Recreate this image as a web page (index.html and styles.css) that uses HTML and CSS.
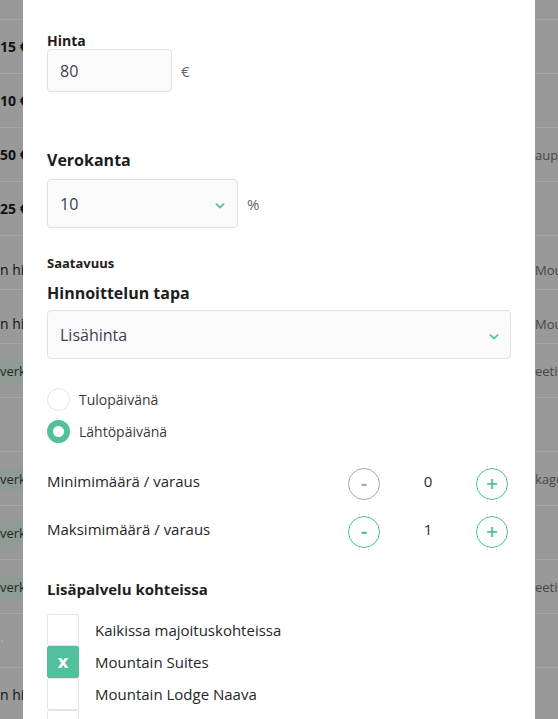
FILE: index.html
```html
<!DOCTYPE html>
<html lang="fi">
<head>
    <meta charset="UTF-8">
    <meta name="viewport" content="width=device-width, initial-scale=1.0">
    <link rel="stylesheet" href="styles.css">
    <title>Lisäpalvelu</title>
</head>
<body>
    <div class="list">
        <div class="row row-top"><span class="left"></span><span class="right"></span></div>
        <div class="row"><span class="left price">15 €</span><span class="right"></span></div>
        <div class="row"><span class="left price">10 €</span><span class="right"></span></div>
        <div class="row"><span class="left price">50 €</span><span class="right">aupa</span></div>
        <div class="row"><span class="left price">25 €</span><span class="right"></span></div>
        <div class="row low"><span class="left">n hinta</span><span class="right">Mountain</span></div>
        <div class="row low"><span class="left">n hinta</span><span class="right">Mountain</span></div>
        <div class="row"><span class="left"><span class="badge">verkko</span></span><span class="right">eeting</span></div>
        <div class="row"><span class="left"></span><span class="right"></span></div>
        <div class="row"><span class="left"><span class="badge">verkko</span></span><span class="right">kage</span></div>
        <div class="row"><span class="left"><span class="badge">verkko</span></span><span class="right"></span></div>
        <div class="row"><span class="left"><span class="badge">verkko</span></span><span class="right">eeting</span></div>
        <div class="row"><span class="left faint">·</span><span class="right"></span></div>
        <div class="row"><span class="left">n hinta</span><span class="right"></span></div>
    </div>

    <div class="modal">
        <div class="field">
            <label class="label label-sm">Hinta</label>
            <div class="inline">
                <div class="input input-price">80</div>
                <span class="unit">€</span>
            </div>
        </div>

        <div class="field field-tax">
            <label class="label">Verokanta</label>
            <div class="inline">
                <div class="input select select-tax">
                    <span>10</span>
                    <svg class="chevron" width="10" height="6" viewBox="0 0 10 6"><path d="M1.5 1.2 L5 4.6 L8.5 1.2" fill="none" stroke="#52bf9d" stroke-width="1.8" stroke-linecap="round"/></svg>
                </div>
                <span class="unit">%</span>
            </div>
        </div>

        <div class="section-title">Saatavuus</div>
        <label class="label">Hinnoittelun tapa</label>
        <div class="input select select-wide">
            <span>Lisähinta</span>
            <svg class="chevron" width="10" height="6" viewBox="0 0 10 6"><path d="M1.5 1.2 L5 4.6 L8.5 1.2" fill="none" stroke="#52bf9d" stroke-width="1.8" stroke-linecap="round"/></svg>
        </div>

        <div class="radios">
            <div class="radio"><span class="dot"></span>Tulopäivänä</div>
            <div class="radio"><span class="dot checked"></span>Lähtöpäivänä</div>
        </div>

        <div class="counters">
            <div class="counter">
                <span class="counter-label">Minimimäärä / varaus</span>
                <div class="stepper">
                    <button class="step disabled">-</button>
                    <span class="count">0</span>
                    <button class="step">+</button>
                </div>
            </div>
            <div class="counter">
                <span class="counter-label">Maksimimäärä / varaus</span>
                <div class="stepper">
                    <button class="step">-</button>
                    <span class="count">1</span>
                    <button class="step">+</button>
                </div>
            </div>
        </div>

        <div class="label label-places">Lisäpalvelu kohteissa</div>
        <div class="checks">
            <div class="check"><span class="box"></span>Kaikissa majoituskohteissa</div>
            <div class="check"><span class="box checked">x</span>Mountain Suites</div>
            <div class="check"><span class="box"></span>Mountain Lodge Naava</div>
            <div class="check"><span class="box"></span>Mountain Lodge Tunturi</div>
        </div>
    </div>
</body>
</html>
```

FILE: styles.css
```css
body {
    margin: 0;
    height: 719px;
    overflow: hidden;
    background-color: #999999;
    font-family: "Open Sans", "DejaVu Sans", sans-serif;
    position: relative;
}

.list {
    display: flex;
    flex-direction: column;
}

.row {
    height: 54px;
    border-bottom: 1px solid #a7a7a7;
    display: flex;
    align-items: center;
    justify-content: space-between;
    box-sizing: border-box;
}

.row-top {
    height: 20px;
}

.row.low {
    padding-top: 14px;
}

.left {
    width: 80px;
    font-size: 14px;
    color: #121212;
    white-space: nowrap;
}

.left.price {
    font-weight: 700;
}

.left.faint {
    color: #b0b0b0;
}

.badge {
    background-color: #8e9c95;
    color: #1f2a25;
    font-size: 13px;
    padding: 3px 4px 3px 0;
}

.right {
    width: 23px;
    font-size: 13px;
    color: #484848;
    white-space: nowrap;
    overflow: hidden;
}

.modal {
    position: absolute;
    left: 23px;
    top: 0;
    width: 512px;
    height: 719px;
    box-sizing: border-box;
    background-color: #ffffff;
    padding: 33px 24px 0;
    color: #1d1d1d;
}

.label {
    display: block;
    font-size: 16px;
    font-weight: 700;
    line-height: 20px;
}

.label-sm {
    font-size: 14px;
    line-height: 16px;
}

.inline {
    display: flex;
    align-items: center;
    gap: 9px;
}

.input {
    box-sizing: border-box;
    background-color: #fafafa;
    border: 1px solid #e1e1e1;
    border-radius: 4px;
    padding: 0 12px;
    font-size: 16px;
    color: #3b4250;
    display: flex;
    align-items: center;
}

.input-price {
    width: 125px;
    height: 43px;
}

.field-tax {
    margin-top: 58px;
}

.field-tax .label {
    margin-bottom: 9px;
}

.select {
    justify-content: space-between;
    height: 49px;
}

.select-tax {
    width: 191px;
}

.select-wide {
    width: 464px;
    margin-top: 7px;
    padding-right: 11px;
}

.chevron {
    margin-top: 4px;
}

.unit {
    font-size: 15px;
    color: #666666;
}

.section-title {
    margin-top: 27px;
    font-size: 13px;
    font-weight: 700;
    line-height: 16px;
}

.section-title + .label {
    margin-top: 12px;
}

.radios {
    margin-top: 29px;
    display: flex;
    flex-direction: column;
    gap: 9px;
}

.radio {
    display: flex;
    align-items: center;
    gap: 9px;
    font-size: 14px;
    color: #3a3a3a;
    line-height: 23px;
}

.radio .dot {
    width: 23px;
    height: 23px;
    box-sizing: border-box;
    border: 1px solid #e2e2e2;
    border-radius: 50%;
}

.radio .dot.checked {
    border: 6px solid #52bf9d;
    background-color: #ffffff;
}

.counters {
    margin-top: 25px;
    display: flex;
    flex-direction: column;
    gap: 16px;
}

.counter {
    display: flex;
    align-items: center;
    justify-content: space-between;
    height: 32px;
}

.counter-label {
    font-size: 15px;
    color: #262626;
    margin-top: -6px;
}

.stepper {
    display: flex;
    align-items: center;
    margin-right: 3px;
}

.step {
    width: 32px;
    height: 32px;
    border: 1px solid #52bf9d;
    border-radius: 50%;
    background: #ffffff;
    color: #52bf9d;
    font-family: "DejaVu Sans", sans-serif;
    font-weight: 700;
    font-size: 16px;
    padding: 0;
    line-height: 30px;
}

.step.disabled {
    border-color: #a6aab5;
    color: #a6aab5;
}

.count {
    width: 96px;
    text-align: center;
    font-size: 15px;
    color: #2a2a2a;
    margin-top: -6px;
}

.label-places {
    margin-top: 31px;
    font-size: 15px;
}

.checks {
    margin-top: 15px;
    display: flex;
    flex-direction: column;
}

.check {
    display: flex;
    align-items: center;
    gap: 16px;
    height: 32px;
    font-size: 15px;
    color: #262626;
}

.box {
    width: 32px;
    height: 32px;
    box-sizing: border-box;
    border: 1px solid #e4e4e4;
    border-radius: 2px;
    display: flex;
    align-items: center;
    justify-content: center;
}

.box.checked {
    background-color: #52bf9d;
    border-color: #52bf9d;
    color: #ffffff;
    font-weight: 700;
    font-size: 17px;
    font-family: "DejaVu Sans", sans-serif;
}
```
